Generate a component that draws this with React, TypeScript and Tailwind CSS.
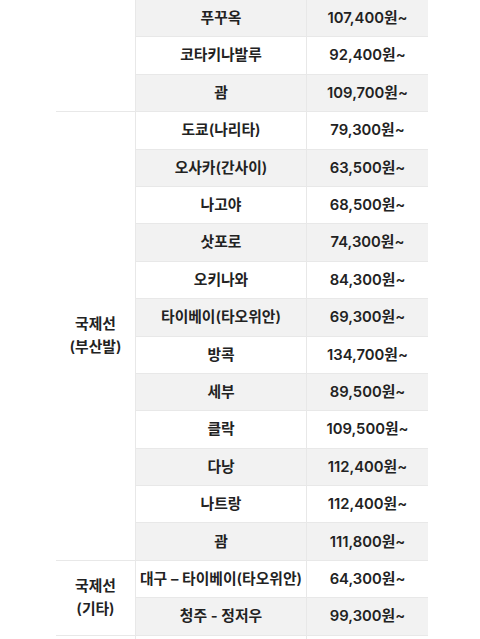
import React from "react";

type Group = { label: string[]; rows: [string, string][] };

const groups: Group[] = [
  {
    label: [],
    rows: [
      ["푸꾸옥", "107,400원~"],
      ["코타키나발루", "92,400원~"],
      ["괌", "109,700원~"],
    ],
  },
  {
    label: ["국제선", "(부산발)"],
    rows: [
      ["도쿄(나리타)", "79,300원~"],
      ["오사카(간사이)", "63,500원~"],
      ["나고야", "68,500원~"],
      ["삿포로", "74,300원~"],
      ["오키나와", "84,300원~"],
      ["타이베이(타오위안)", "69,300원~"],
      ["방콕", "134,700원~"],
      ["세부", "89,500원~"],
      ["클락", "109,500원~"],
      ["다낭", "112,400원~"],
      ["나트랑", "112,400원~"],
      ["괌", "111,800원~"],
    ],
  },
  {
    label: ["국제선", "(기타)"],
    rows: [
      ["대구 – 타이베이(타오위안)", "64,300원~"],
      ["청주 - 정저우", "99,300원~"],
    ],
  },
  {
    label: [],
    rows: [["", ""]],
  },
];

export default function App() {
  let idx = 0;
  return (
    <div
      className="bg-white pl-[56px] overflow-hidden h-[639px]"
      style={{ fontFamily: '"Inter", "Noto Sans CJK KR", "Noto Sans", sans-serif' }}
    >
      <div className="w-[372px] text-[14.8px] font-semibold text-[#222222]">
        {groups.map((g, gi) => (
          <div key={gi} className="flex">
            <div className="w-[80px] shrink-0 flex flex-col items-center justify-center border-b border-r border-[#e8e8e8] leading-[23px] text-center">
              {g.label.map((l, li) => (
                <div key={li}>{l}</div>
              ))}
            </div>
            <div className="flex-1 flex flex-col">
              {g.rows.map((r, ri) => {
                const gray = idx % 2 === 0;
                idx++;
                return (
                  <div
                    key={ri}
                    className={
                      "flex h-[37.4px] border-b border-[#e8e8e8] " +
                      (gray ? "bg-[#f2f2f2]" : "bg-white")
                    }
                  >
                    <div className="w-[171px] shrink-0 flex items-center justify-center border-r border-[#e8e8e8]">
                      {r[0]}
                    </div>
                    <div className="flex-1 flex items-center justify-center">
                      {r[1]}
                    </div>
                  </div>
                );
              })}
            </div>
          </div>
        ))}
      </div>
    </div>
  );
}
